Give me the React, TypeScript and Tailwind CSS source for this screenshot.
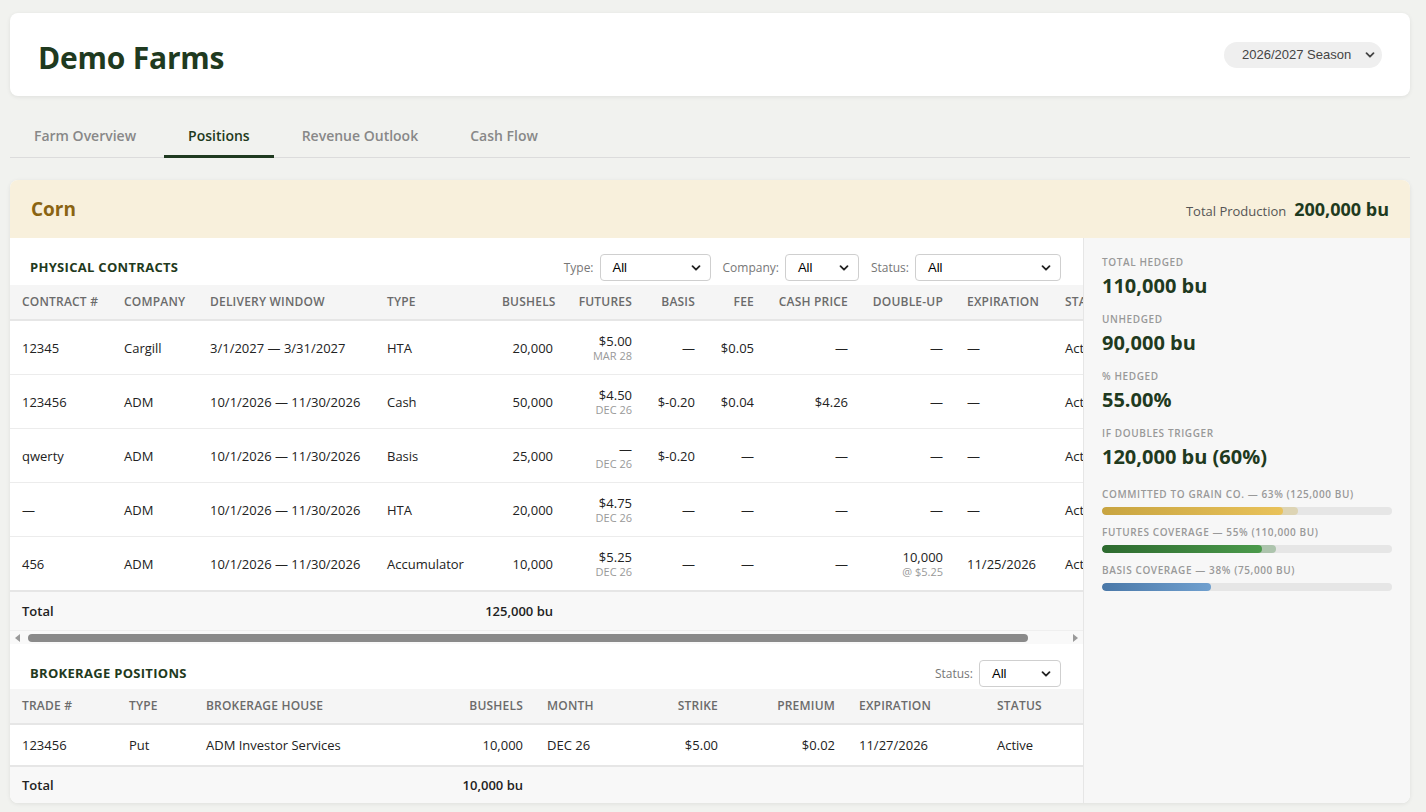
import React from "react";

const GREEN = "text-[#1f3a20]";

function Chevron({ className = "" }: { className?: string }) {
  return (
    <svg width="10" height="10" viewBox="0 0 10 10" className={className} fill="none">
      <path d="M1.5 3.2 5 6.7l3.5-3.5" stroke="currentColor" strokeWidth="1.8" strokeLinecap="round" strokeLinejoin="round" />
    </svg>
  );
}

function FilterSelect({ label, width }: { label: string; width: string }) {
  return (
    <div className="flex items-center gap-[6px]">
      <span className="text-[12px] text-[#777]">{label}</span>
      <div
        className={`${width} h-[27px] flex items-center justify-between pl-[12px] pr-[9px] bg-white border border-[#cfcfcf] rounded-[4px] text-[13px] text-black`}
        style={{ fontFamily: '"Liberation Sans", Arial, sans-serif' }}
      >
        <span>All</span>
        <Chevron className="text-[#222]" />
      </div>
    </div>
  );
}

type PRow = {
  id: string;
  company: string;
  window: string;
  type: string;
  bushels: string;
  fut: string;
  futSub: string;
  basis: string;
  fee: string;
  cash: string;
  dbl: string;
  dblSub?: string;
  exp: string;
  status: string;
};

const pRows: PRow[] = [
  { id: "12345", company: "Cargill", window: "3/1/2027 — 3/31/2027", type: "HTA", bushels: "20,000", fut: "$5.00", futSub: "MAR 28", basis: "—", fee: "$0.05", cash: "—", dbl: "—", exp: "—", status: "Active" },
  { id: "123456", company: "ADM", window: "10/1/2026 — 11/30/2026", type: "Cash", bushels: "50,000", fut: "$4.50", futSub: "DEC 26", basis: "$-0.20", fee: "$0.04", cash: "$4.26", dbl: "—", exp: "—", status: "Active" },
  { id: "qwerty", company: "ADM", window: "10/1/2026 — 11/30/2026", type: "Basis", bushels: "25,000", fut: "—", futSub: "DEC 26", basis: "$-0.20", fee: "—", cash: "—", dbl: "—", exp: "—", status: "Active" },
  { id: "—", company: "ADM", window: "10/1/2026 — 11/30/2026", type: "HTA", bushels: "20,000", fut: "$4.75", futSub: "DEC 26", basis: "—", fee: "—", cash: "—", dbl: "—", exp: "—", status: "Active" },
  { id: "456", company: "ADM", window: "10/1/2026 — 11/30/2026", type: "Accumulator", bushels: "10,000", fut: "$5.25", futSub: "DEC 26", basis: "—", fee: "—", cash: "—", dbl: "10,000", dblSub: "@ $5.25", exp: "11/25/2026", status: "Active" },
];

const pCols: { label: string; w: string; right?: boolean }[] = [
  { label: "Contract #", w: "w-[102px]" },
  { label: "Company", w: "w-[86px]" },
  { label: "Delivery Window", w: "w-[177px]" },
  { label: "Type", w: "w-[115px]" },
  { label: "Bushels", w: "w-[75px]", right: true },
  { label: "Futures", w: "w-[79px]", right: true },
  { label: "Basis", w: "w-[63px]", right: true },
  { label: "Fee", w: "w-[59px]", right: true },
  { label: "Cash Price", w: "w-[94px]", right: true },
  { label: "Double-Up", w: "w-[95px]", right: true },
  { label: "Expiration", w: "w-[98px]" },
  { label: "Status", w: "w-[77px]" },
];

const bCols: { label: string; w: string; right?: boolean }[] = [
  { label: "Trade #", w: "w-[107px]" },
  { label: "Type", w: "w-[77px]" },
  { label: "Brokerage House", w: "w-[251px]" },
  { label: "Bushels", w: "w-[90px]", right: true },
  { label: "Month", w: "w-[95px]" },
  { label: "Strike", w: "w-[100px]", right: true },
  { label: "Premium", w: "w-[117px]", right: true },
  { label: "Expiration", w: "w-[138px]" },
  { label: "Status", w: "w-[98px]" },
];

const th = "px-3 py-[9px] text-[12px] leading-4 font-semibold uppercase tracking-[0.2px] text-[#6b6b6b] whitespace-nowrap";
const td = "px-3 py-3 text-[13px] leading-4 text-[#222] whitespace-nowrap align-middle";

function HeaderRow({ cols }: { cols: { label: string; w: string; right?: boolean }[] }) {
  return (
    <thead>
      <tr className="bg-[#f5f5f5] border-b-2 border-[#e6e6e6]">
        {cols.map((c) => (
          <th key={c.label} className={`${th} ${c.right ? "text-right" : "text-left"}`}>
            {c.label}
          </th>
        ))}
      </tr>
    </thead>
  );
}

function StatBlock({ label, value }: { label: string; value: string }) {
  return (
    <div className="mb-[13px]">
      <div className="text-[10px] leading-[14px] font-semibold uppercase tracking-[0.6px] text-[#999]">{label}</div>
      <div className={`mt-[4px] text-[20px] leading-[26px] font-bold ${GREEN}`}>{value}</div>
    </div>
  );
}

function Bar({ label, solid, light, fill, lightColor }: { label: string; solid: string; light?: string; fill: string; lightColor?: string }) {
  return (
    <div className="mb-[10px]">
      <div className="text-[10px] leading-[14px] font-semibold uppercase tracking-[0.6px] text-[#999] whitespace-nowrap">{label}</div>
      <div className="mt-[6px] relative h-[8px] w-full rounded-full bg-[#e6e6e6] overflow-hidden">
        {light && <div className={`absolute left-0 top-0 h-full rounded-full ${lightColor}`} style={{ width: light }} />}
        <div className={`absolute left-0 top-0 h-full rounded-full ${fill}`} style={{ width: solid }} />
      </div>
    </div>
  );
}

export default function App() {
  return (
    <div
      className="h-[812px] overflow-hidden bg-[#f1f2ef] pl-[10px] pr-[16px] pt-[13px]"
      style={{ fontFamily: '"Open Sans", "Noto Sans", sans-serif' }}
    >
      {/* Header card */}
      <header className="bg-white rounded-[8px] shadow-[0_1px_4px_rgba(0,0,0,0.08)] px-7 pt-5 pb-[17px] flex items-center justify-between">
        <h1 className={`pt-[3px] text-[30px] leading-[43px] font-bold ${GREEN} tracking-[-0.2px]`}>Demo Farms</h1>
        <div
          className="w-[158px] h-[26px] -mt-[3px] rounded-full bg-[#efefef] flex items-center justify-between pl-[18px] pr-[7px] text-[13px] text-[#444]"
          style={{ fontFamily: '"Liberation Sans", Arial, sans-serif' }}
        >
          <span>2026/2027 Season</span>
          <Chevron className="text-[#444]" />
        </div>
      </header>

      {/* Tabs */}
      <nav className="mt-[18px] flex gap-1 border-b border-[#dcdcdc]">
        {["Farm Overview", "Positions", "Revenue Outlook", "Cash Flow"].map((t) => {
          const active = t === "Positions";
          return (
            <div
              key={t}
              className={`px-6 pt-3 pb-[9px] text-[14px] leading-5 font-semibold border-b-[3px] -mb-px ${
                active ? "border-[#1f3a20] text-[#1f3a20]" : "border-transparent text-[#888]"
              }`}
            >
              {t}
            </div>
          );
        })}
      </nav>

      {/* Corn card */}
      <section className="mt-[22px] bg-white rounded-[8px] shadow-[0_1px_4px_rgba(0,0,0,0.08)] overflow-hidden">
        <div className="bg-[#f8f0dc] px-[21px] flex items-center justify-between h-[58px]">
          <h2 className="text-[19px] font-bold text-[#8a6412]">Corn</h2>
          <div className="flex items-baseline gap-2">
            <span className="text-[13px] text-[#555]">Total Production</span>
            <span className={`text-[18px] font-bold ${GREEN}`}>200,000 bu</span>
          </div>
        </div>

        <div className="flex">
          {/* Main */}
          <div className="flex-1 min-w-0">
            <div className="px-5 pt-[16px] pb-1 flex items-center justify-between">
              <h3 className={`text-[13px] font-bold uppercase tracking-[0.3px] ${GREEN}`}>Physical Contracts</h3>
              <div className="flex items-center gap-3 pr-[2px]">
                <FilterSelect label="Type:" width="w-[111px]" />
                <FilterSelect label="Company:" width="w-[74px]" />
                <FilterSelect label="Status:" width="w-[146px]" />
              </div>
            </div>

            <div className="overflow-hidden">
              <table className="w-[1120px] table-fixed border-collapse">
                <colgroup>
                  {pCols.map((c) => (
                    <col key={c.label} className={c.w} />
                  ))}
                </colgroup>
                <HeaderRow cols={pCols} />
                <tbody>
                  {pRows.map((r, i) => (
                    <tr key={i} className="border-b border-[#ececec]">
                      <td className={td}>{r.id}</td>
                      <td className={td}>{r.company}</td>
                      <td className={td}>{r.window}</td>
                      <td className={td}>{r.type}</td>
                      <td className={`${td} text-right`}>{r.bushels}</td>
                      <td className={`${td} text-right`}>
                        <div>{r.fut}</div>
                        <div className="text-[11px] leading-[13px] text-[#999] uppercase">{r.futSub}</div>
                      </td>
                      <td className={`${td} text-right`}>{r.basis}</td>
                      <td className={`${td} text-right`}>{r.fee}</td>
                      <td className={`${td} text-right`}>{r.cash}</td>
                      <td className={`${td} text-right`}>
                        <div>{r.dbl}</div>
                        {r.dblSub && <div className="text-[11px] leading-[13px] text-[#999]">{r.dblSub}</div>}
                      </td>
                      <td className={td}>{r.exp}</td>
                      <td className={td}>{r.status}</td>
                    </tr>
                  ))}
                  <tr className="bg-[#f8f8f8] border-t-2 border-[#e6e6e6]">
                    <td className={`${td} py-[11px] font-semibold`}>Total</td>
                    <td className={td}></td>
                    <td className={td}></td>
                    <td className={td}></td>
                    <td className={`${td} py-[11px] font-semibold`}>
                      <div className="flex justify-end">
                        <span className="whitespace-nowrap">125,000 bu</span>
                      </div>
                    </td>
                    <td className={td} colSpan={7}></td>
                  </tr>
                </tbody>
              </table>
            </div>

            {/* horizontal scrollbar */}
            <div className="h-[14px] flex items-center bg-[#f9f9f9] border-t border-[#efefef]">
              <div className="w-[16px] flex justify-center">
                <svg width="6" height="8" viewBox="0 0 6 8">
                  <path d="M5 0v8L0 4z" fill="#9a9a9a" />
                </svg>
              </div>
              <div className="flex-1 px-[2px]">
                <div className="w-[1000px] h-[8px] rounded-full bg-[#8a8a8a]" />
              </div>
              <div className="w-[16px] flex justify-center">
                <svg width="6" height="8" viewBox="0 0 6 8">
                  <path d="M1 0v8l5-4z" fill="#9a9a9a" />
                </svg>
              </div>
            </div>

            <div className="px-5 pt-4 pb-[2px] flex items-center justify-between">
              <h3 className={`text-[13px] font-bold uppercase tracking-[0.3px] ${GREEN}`}>Brokerage Positions</h3>
              <div className="pr-[2px]">
                <FilterSelect label="Status:" width="w-[82px]" />
              </div>
            </div>

            <table className="w-full table-fixed border-collapse">
              <colgroup>
                {bCols.map((c) => (
                  <col key={c.label} className={c.w} />
                ))}
              </colgroup>
              <HeaderRow cols={bCols} />
              <tbody>
                <tr className="border-b border-[#ececec]">
                  <td className={td}>123456</td>
                  <td className={td}>Put</td>
                  <td className={td}>ADM Investor Services</td>
                  <td className={`${td} text-right`}>10,000</td>
                  <td className={td}>DEC 26</td>
                  <td className={`${td} text-right`}>$5.00</td>
                  <td className={`${td} text-right`}>$0.02</td>
                  <td className={td}>11/27/2026</td>
                  <td className={td}>Active</td>
                </tr>
                <tr className="bg-[#f8f8f8] border-t-2 border-[#e6e6e6]">
                  <td className={`${td} py-[10px] font-semibold`}>Total</td>
                  <td className={td}></td>
                  <td className={td}></td>
                  <td className={`${td} py-[10px] font-semibold`}>
                    <div className="flex justify-end">
                      <span className="whitespace-nowrap">10,000 bu</span>
                    </div>
                  </td>
                  <td className={td} colSpan={5}></td>
                </tr>
              </tbody>
            </table>
          </div>

          {/* Right panel */}
          <aside className="w-[327px] shrink-0 bg-[#f7f7f7] border-l border-[#e6e6e6] px-[18px] pt-[17px]">
            <StatBlock label="Total Hedged" value="110,000 bu" />
            <StatBlock label="Unhedged" value="90,000 bu" />
            <StatBlock label="% Hedged" value="55.00%" />
            <StatBlock label="If Doubles Trigger" value="120,000 bu (60%)" />
            <div className="pt-[4px]">
              <Bar
                label="Committed to Grain Co. — 63% (125,000 bu)"
                solid="62.5%"
                light="67.5%"
                fill="bg-gradient-to-r from-[#c8a440] to-[#e9c25a]"
                lightColor="bg-[#ddd4b4]"
              />
              <Bar
                label="Futures Coverage — 55% (110,000 bu)"
                solid="55%"
                light="60%"
                fill="bg-gradient-to-r from-[#2d6a2f] to-[#4b9a4b]"
                lightColor="bg-[#adc4ad]"
              />
              <Bar
                label="Basis Coverage — 38% (75,000 bu)"
                solid="37.5%"
                fill="bg-gradient-to-r from-[#4a78a8] to-[#70a0cf]"
              />
            </div>
          </aside>
        </div>
      </section>
    </div>
  );
}
